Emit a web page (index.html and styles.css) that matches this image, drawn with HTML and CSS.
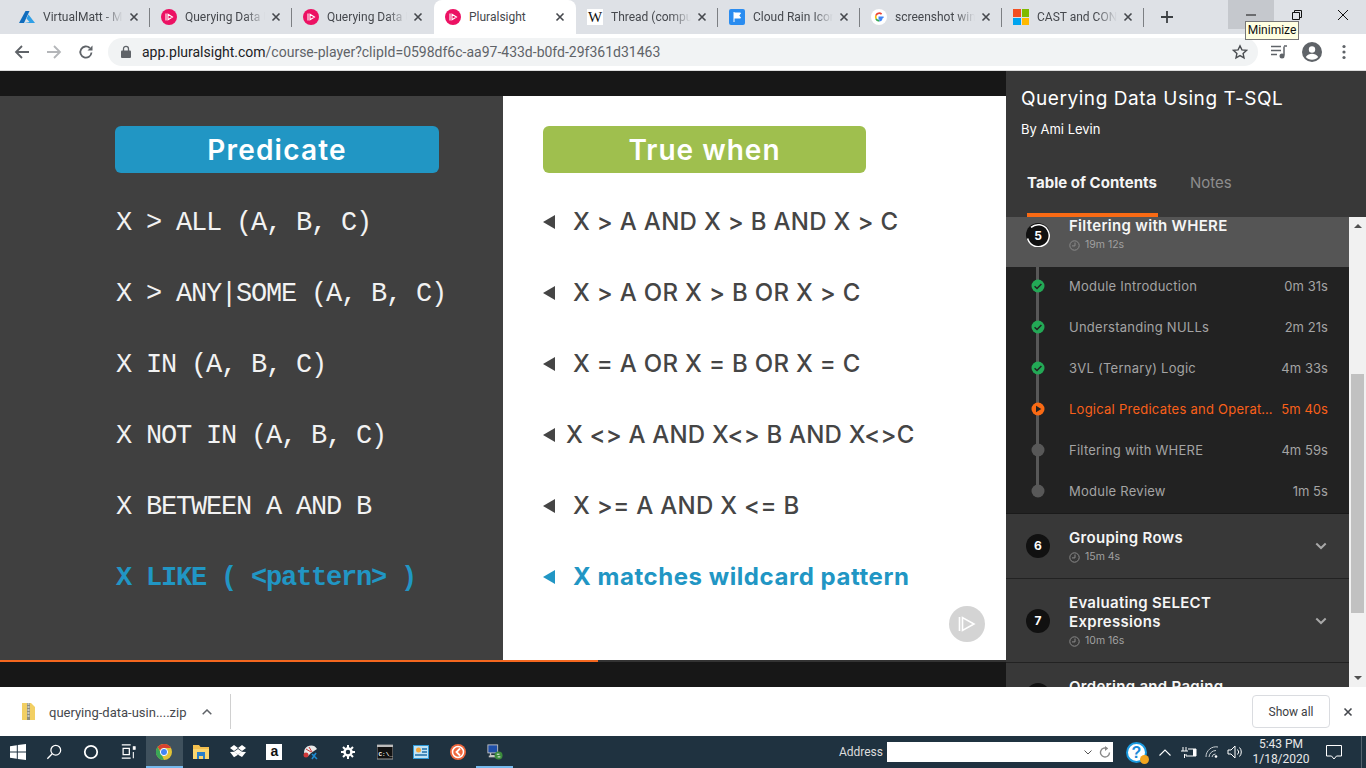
FILE: index.html
```html
<!DOCTYPE html>
<html lang="en">
<head>
<meta charset="utf-8">
<title>Pluralsight</title>
<link rel="stylesheet" href="styles.css">
</head>
<body>
<svg class="defs" width="0" height="0" aria-hidden="true">
  <symbol id="ps" viewBox="0 0 16 16">
    <circle cx="8" cy="8" r="8" fill="#ec1163"/>
    <path d="M5 4.500v7M7 5.200v5.600l4.500-2.800z" fill="none" stroke="#fff" stroke-width="1.100"/>
  </symbol>
  <symbol id="x" viewBox="0 0 10 10">
    <path d="M1.500 1.500l7 7M8.500 1.500l-7 7" stroke="#45484d" stroke-width="1.600" fill="none"/>
  </symbol>
  <symbol id="check" viewBox="0 0 14 14">
    <circle cx="7" cy="7" r="6.500" fill="#23a956"/>
    <path d="M3.600 7.200l2.400 2.300 4.400-4.600" fill="none" stroke="#222" stroke-width="1.500"/>
  </symbol>
  <symbol id="clock" viewBox="0 0 11 11">
    <circle cx="5.500" cy="5.500" r="4.700" fill="none" stroke="#8b8b8b" stroke-width="1"/>
    <path d="M6 2.500v3.400H3" fill="none" stroke="#8b8b8b" stroke-width="1"/>
  </symbol>
  <symbol id="chev" viewBox="0 0 12 8">
    <path d="M1.300 1.500L6 6l4.700-4.500" fill="none" stroke="#a8a8a8" stroke-width="2"/>
  </symbol>
</svg>

<header class="tabstrip">
  <div class="tab sep">
    <svg class="favicon" viewBox="0 0 16 16"><path d="M6.500 2h4L5 14H0z" fill="#0f6cbd"/><path d="M9.500 5.500L16 14H5.500l5-1-3-3.500z" fill="#2f9fe6"/></svg>
    <span class="tab-title">VirtualMatt - Microsoft</span>
    <svg class="tab-x"><use href="#x"/></svg>
  </div>
  <div class="tab sep">
    <svg class="favicon"><use href="#ps"/></svg>
    <span class="tab-title">Querying Data Using</span>
    <svg class="tab-x"><use href="#x"/></svg>
  </div>
  <div class="tab">
    <svg class="favicon"><use href="#ps"/></svg>
    <span class="tab-title">Querying Data Using</span>
    <svg class="tab-x"><use href="#x"/></svg>
  </div>
  <div class="tab tab-active">
    <svg class="favicon"><use href="#ps"/></svg>
    <span class="tab-title">Pluralsight</span>
    <svg class="tab-x"><use href="#x"/></svg>
  </div>
  <div class="tab sep">
    <span class="favicon wiki">W</span>
    <span class="tab-title">Thread (computing)</span>
    <svg class="tab-x"><use href="#x"/></svg>
  </div>
  <div class="tab sep">
    <svg class="favicon" viewBox="0 0 16 16"><rect width="16" height="16" rx="2" fill="#2a8cf0"/><path d="M5 3v10M5 4h6.500l-1.500 2.500 1.500 2.500H5" fill="#fff" stroke="#fff"/></svg>
    <span class="tab-title">Cloud Rain Icon</span>
    <svg class="tab-x"><use href="#x"/></svg>
  </div>
  <div class="tab sep">
    <svg class="favicon" viewBox="0 0 16 16"><circle cx="8" cy="8" r="8" fill="#fff"/><path d="M12.600 8.200H8.300v1.700h2.400c-.3 1.200-1.300 1.900-2.500 1.900" fill="none" stroke="#4285f4" stroke-width="1.600"/><path d="M8.200 11.800c-1.500 0-2.700-.9-3.200-2.200" fill="none" stroke="#34a853" stroke-width="1.700"/><path d="M5 9.600c-.4-1-.4-2.200 0-3.200" fill="none" stroke="#fbbc05" stroke-width="1.700"/><path d="M5 6.400c.5-1.300 1.700-2.200 3.200-2.200 1 0 1.700.3 2.400.9" fill="none" stroke="#ea4335" stroke-width="1.700"/></svg>
    <span class="tab-title">screenshot windows</span>
    <svg class="tab-x"><use href="#x"/></svg>
  </div>
  <div class="tab sep">
    <span class="favicon ms"><i class="ms-r"></i><i class="ms-g"></i><i class="ms-b"></i><i class="ms-y"></i></span>
    <span class="tab-title">CAST and CONVERT</span>
    <svg class="tab-x"><use href="#x"/></svg>
  </div>
  <svg class="newtab" viewBox="0 0 12 12"><path d="M6 0v12M0 6h12" stroke="#3c4043" stroke-width="1.800" fill="none"/></svg>
  <div class="winctl">
    <div class="wc wc-hover"><svg viewBox="0 0 10 10"><path d="M0 5h10" stroke="#111" fill="none"/></svg></div>
    <div class="wc"><svg viewBox="0 0 10 10"><path d="M.5 2.500h7v7h-7zM2.500 2.500V.5h7v7h-2" stroke="#111" fill="none"/></svg></div>
    <div class="wc"><svg viewBox="0 0 10 10"><path d="M0 0l10 10M10 0L0 10" stroke="#111" fill="none"/></svg></div>
  </div>
  <div class="tooltip">Minimize</div>
</header>

<nav class="toolbar">
  <svg class="tb-ico" viewBox="0 0 16 16"><path d="M15 8H2M8 2L2 8l6 6" fill="none" stroke="#5f6368" stroke-width="1.800"/></svg>
  <svg class="tb-ico" viewBox="0 0 16 16"><path d="M1 8h13M8 2l6 6-6 6" fill="none" stroke="#b4b6b9" stroke-width="1.800"/></svg>
  <svg class="tb-ico" viewBox="0 0 16 16"><path d="M13.500 8.500A5.600 5.600 0 1 1 11.800 4" fill="none" stroke="#5f6368" stroke-width="1.800"/><path d="M14.500 1.500v5h-5z" fill="#5f6368"/></svg>
  <div class="omnibox">
    <svg class="lock" viewBox="0 0 10 13"><path d="M2.500 6V3.800a2.500 2.500 0 0 1 5 0V6" fill="none" stroke="#5f6368" stroke-width="1.300"/><rect y="5.500" width="10" height="7.500" rx="1" fill="#5f6368"/></svg>
    <span class="url"><span class="url-host">app.pluralsight.com</span>/course-player?clipId=0598df6c-aa97-433d-b0fd-29f361d31463</span>
    <svg class="star" viewBox="0 0 16 16"><path d="M8 1.800l1.900 4.100 4.500.5-3.300 3 .9 4.400L8 11.600l-4 2.200.9-4.400-3.300-3 4.500-.5z" fill="none" stroke="#4a4d51" stroke-width="1.400"/></svg>
  </div>
  <svg class="tb-right media" viewBox="0 0 16 14"><path d="M0 1.500h10M0 5.500h10M0 9.500h6" stroke="#5f6368" stroke-width="1.500" fill="none"/><path d="M13 1.500v9" stroke="#5f6368" stroke-width="1.500"/><path d="M13 1h3" stroke="#5f6368" stroke-width="1.500"/><circle cx="11" cy="11" r="2.500" fill="#5f6368"/></svg>
  <svg class="tb-right avatar" viewBox="0 0 20 20"><circle cx="10" cy="10" r="10" fill="#5f6368"/><circle cx="10" cy="7.500" r="3.200" fill="#fff"/><path d="M3.800 15c1.500-2.500 3.800-3.200 6.200-3.200s4.700.7 6.200 3.200c-1.500 1.800-3.700 2.800-6.200 2.800S5.300 16.800 3.800 15z" fill="#fff"/></svg>
  <svg class="tb-right dots" viewBox="0 0 4 16"><circle cx="2" cy="2.500" r="1.600" fill="#5f6368"/><circle cx="2" cy="8" r="1.600" fill="#5f6368"/><circle cx="2" cy="13.500" r="1.600" fill="#5f6368"/></svg>
</nav>

<main class="player">
  <section class="video">
    <div class="video-top"></div>
    <div class="slide">
      <div class="slide-col slide-left">
        <div class="pill pill-blue">Predicate</div>
        <div class="code-row">X &gt; ALL (A, B, C)</div>
        <div class="code-row">X &gt; ANY|SOME (A, B, C)</div>
        <div class="code-row">X IN (A, B, C)</div>
        <div class="code-row">X NOT IN (A, B, C)</div>
        <div class="code-row">X BETWEEN A AND B</div>
        <div class="code-row code-hl">X LIKE ( &lt;pattern&gt; )</div>
      </div>
      <div class="slide-col slide-right">
        <div class="pill pill-green">True when</div>
        <div class="true-row"><i class="tri"></i>X &gt; A AND X &gt; B AND X &gt; C</div>
        <div class="true-row"><i class="tri"></i>X &gt; A OR X &gt; B OR X &gt; C</div>
        <div class="true-row"><i class="tri"></i>X = A OR X = B OR X = C</div>
        <div class="true-row tight"><i class="tri"></i>X &lt;&gt; A AND X&lt;&gt; B AND X&lt;&gt;C</div>
        <div class="true-row"><i class="tri"></i>X &gt;= A AND X &lt;= B</div>
        <div class="true-row true-hl"><i class="tri"></i>X matches wildcard pattern</div>
        <svg class="watermark" viewBox="0 0 36 36"><circle cx="18" cy="18" r="18" fill="#d4d4d4"/><path d="M10.500 11v14M13.500 11.500v13L25 18z" fill="none" stroke="#fff" stroke-width="1.600"/></svg>
      </div>
    </div>
    <div class="progress"><div class="progress-fill"></div></div>
  </section>

  <aside class="sidebar">
    <div class="course-head">
      <h1 class="course-title">Querying Data Using T-SQL</h1>
      <p class="course-author">By Ami Levin</p>
    </div>
    <div class="side-tabs">
      <span class="side-tab side-tab-on">Table of Contents</span>
      <span class="side-tab">Notes</span>
    </div>
    <div class="toc-wrap">
      <div class="toc">
        <div class="module module-open">
          <svg class="mod-ring" viewBox="0 0 24 24"><circle cx="12" cy="12" r="12" fill="#111"/><path d="M5 4.400A11 11 0 1 1 1.600 15.500" fill="none" stroke="#fff" stroke-width="1.500"/><text class="ring-num" x="12" y="16.500" text-anchor="middle">5</text></svg>
          <div class="mod-text">
            <div class="mod-title">Filtering with WHERE</div>
            <div class="mod-dur"><svg class="clock"><use href="#clock"/></svg>19m 12s</div>
          </div>
        </div>
        <ul class="lessons">
          <li class="lesson"><svg class="dot"><use href="#check"/></svg><span class="l-name">Module Introduction</span><span class="l-time">0m 31s</span></li>
          <li class="lesson"><svg class="dot"><use href="#check"/></svg><span class="l-name">Understanding NULLs</span><span class="l-time">2m 21s</span></li>
          <li class="lesson"><svg class="dot"><use href="#check"/></svg><span class="l-name">3VL (Ternary) Logic</span><span class="l-time">4m 33s</span></li>
          <li class="lesson lesson-on"><svg class="dot" viewBox="0 0 14 14"><circle cx="7" cy="7" r="6.500" fill="#f96a14"/><path d="M5 3.800v6.400L10.300 7z" fill="#222"/></svg><span class="l-name">Logical Predicates and Operators</span><span class="l-time">5m 40s</span></li>
          <li class="lesson"><svg class="dot" viewBox="0 0 14 14"><circle cx="7" cy="7" r="6.500" fill="#585858"/></svg><span class="l-name">Filtering with WHERE</span><span class="l-time">4m 59s</span></li>
          <li class="lesson"><svg class="dot" viewBox="0 0 14 14"><circle cx="7" cy="7" r="6.500" fill="#585858"/></svg><span class="l-name">Module Review</span><span class="l-time">1m 5s</span></li>
        </ul>
        <div class="module">
          <span class="mod-num">6</span>
          <div class="mod-text">
            <div class="mod-title">Grouping Rows</div>
            <div class="mod-dur"><svg class="clock"><use href="#clock"/></svg>15m 4s</div>
          </div>
          <svg class="chev"><use href="#chev"/></svg>
        </div>
        <div class="module">
          <span class="mod-num">7</span>
          <div class="mod-text">
            <div class="mod-title">Evaluating SELECT<br>Expressions</div>
            <div class="mod-dur"><svg class="clock"><use href="#clock"/></svg>10m 16s</div>
          </div>
          <svg class="chev"><use href="#chev"/></svg>
        </div>
        <div class="module">
          <span class="mod-num">8</span>
          <div class="mod-text">
            <div class="mod-title">Ordering and Paging</div>
            <div class="mod-dur"><svg class="clock"><use href="#clock"/></svg>12m 8s</div>
          </div>
          <svg class="chev"><use href="#chev"/></svg>
        </div>
      </div>
      <div class="scrollbar">
        <i class="sb-up"></i>
        <div class="sb-track"><div class="sb-thumb"></div></div>
        <i class="sb-down"></i>
      </div>
    </div>
  </aside>
</main>

<footer class="downloads">
  <div class="dl-item">
    <svg class="zip" viewBox="0 0 13 17"><path d="M0 0h9l4 4v13H0z" fill="#f2cf63"/><path d="M5 0h3v17H5z" fill="#8d8d7c"/><path d="M5.500 1h2M5.500 4h2M5.500 7h2M5.500 10h2M5.500 13h2" stroke="#fff"/></svg>
    <span class="dl-name">querying-data-usin....zip</span>
    <svg class="dl-caret" viewBox="0 0 10 6"><path d="M.7 5.300L5 1l4.300 4.300" fill="none" stroke="#5f6368" stroke-width="1.500"/></svg>
  </div>
  <button class="showall">Show all</button>
  <svg class="dl-close"><use href="#x"/></svg>
</footer>

<div class="taskbar">
  <svg class="tk-start" viewBox="0 0 16 16"><path d="M0 2.200L6.800 1.200V7.500H0zM7.800 1L16 0v7.500H7.800zM0 8.500h6.800v6.300L0 13.800zM7.800 8.500H16V16l-8.200-1.100z" fill="#fff"/></svg>
  <div class="tk-btn"><svg viewBox="0 0 18 18"><circle cx="11" cy="7" r="5.500" fill="none" stroke="#fff" stroke-width="1.400"/><path d="M7 11l-5.500 5.500" stroke="#fff" stroke-width="1.500"/></svg></div>
  <div class="tk-btn"><svg viewBox="0 0 18 18"><circle cx="9" cy="9" r="7" fill="none" stroke="#fff" stroke-width="2"/></svg></div>
  <div class="tk-btn"><svg viewBox="0 0 18 18"><path d="M2 1h10M2 16h10M3.500 5h7v7h-7z" fill="none" stroke="#fff" stroke-width="1.400"/><path d="M15 3h2v3h-2zM15 9v7" stroke="#fff" stroke-width="1.200" fill="#fff"/></svg></div>
  <div class="tk-btn tk-active"><svg viewBox="0 0 16 16"><circle cx="8" cy="8" r="8" fill="#e2c336"/><path d="M8 0a8 8 0 0 1 7 4H8a4 4 0 0 0-3.800 2.800L1.700 3A8 8 0 0 1 8 0z" fill="#d8412f"/><path d="M1.700 3L5 9.500 8 16A8 8 0 0 1 1.700 3z" fill="#3aa757"/><circle cx="8" cy="8" r="3.600" fill="#4285f4" stroke="#fff" stroke-width="1"/></svg></div>
  <div class="tk-btn"><svg viewBox="0 0 16 16"><path d="M0 1h6l1.500 2H16v12H0z" fill="#f4c04e"/><path d="M0 5h16v10H0z" fill="#fbd66f"/><path d="M4 8h8v7H10v-3H6v3H4z" fill="#2a7fc9"/></svg></div>
  <div class="tk-btn"><svg viewBox="0 0 16 16"><path d="M4 1L8 4 4 7 0 4zM12 1l4 3-4 3-4-3zM4 7.800l4-2.800 4 2.800-4 2.800zM0 8l4-.3 4 3-4 2.500zM12 7.700L16 8l-4 5-4-2.200z" fill="#fff"/></svg></div>
  <div class="tk-btn"><span class="amazon">a</span></div>
  <div class="tk-btn"><svg viewBox="0 0 16 16"><path d="M1 8a7 7 0 0 1 13-3L8 9l-3 3H2z" fill="#e8e8e8"/><path d="M3 5l5 3M6 3l3 5" stroke="#d03838"/><circle cx="3" cy="11" r="2.500" fill="#d03838"/><path d="M9 10l5 5M13 9l-4 6" stroke="#1f8ad0" stroke-width="1.600"/></svg></div>
  <div class="tk-btn"><svg viewBox="0 0 16 16"><circle cx="8" cy="8" r="3.500" fill="none" stroke="#fff" stroke-width="2.500"/><path d="M8 1v3M8 12v3M1 8h3M12 8h3M3 3l2 2M11 11l2 2M13 3l-2 2M5 11l-2 2" stroke="#fff" stroke-width="2"/></svg></div>
  <div class="tk-btn"><svg viewBox="0 0 16 14"><rect width="16" height="14" fill="#111" stroke="#999"/><rect width="16" height="2" fill="#bbb"/><text class="cmd-txt" x="1.500" y="10.500">C:\_</text></svg></div>
  <div class="tk-btn"><svg viewBox="0 0 16 14"><rect width="16" height="14" fill="#2d9ad8"/><rect x="1" y="1" width="14" height="12" fill="#bfe3f6"/><circle cx="5.500" cy="5" r="2.500" fill="#f2a63c"/><path d="M9 4h5M9 7h5M2 10h12" stroke="#1f6fa8" stroke-width="1.300"/></svg></div>
  <div class="tk-btn"><svg viewBox="0 0 16 16"><circle cx="8" cy="8" r="8" fill="#f0673c"/><circle cx="8" cy="8" r="5.500" fill="none" stroke="#fff" stroke-width="1.500"/><path d="M10 4.500L6.500 8l3.500 3.500" fill="none" stroke="#fff" stroke-width="1.800"/></svg></div>
  <div class="tk-btn tk-running"><svg viewBox="0 0 18 18"><rect x="1" y="1" width="11" height="9" fill="#1f4fa8" stroke="#c4c4c4"/><path d="M4 10v3h6" stroke="#c4c4c4" stroke-width="1.500" fill="none"/><rect x="2" y="13" width="9" height="2" fill="#c4c4c4"/><circle cx="13" cy="13" r="4.500" fill="#3c8c3c"/><path d="M11 11.500h3M12 14.500h3" stroke="#fff"/></svg></div>
  <div class="tk-tray">
    <span class="addr-label">Address</span>
    <div class="addr-box">
      <svg class="addr-chev" viewBox="0 0 8 5"><path d="M.5.500L4 4 7.500.5" fill="none" stroke="#555"/></svg>
      <svg class="addr-go" viewBox="0 0 12 12"><path d="M10.500 6.500a4.500 4.500 0 1 1-2-3.800" fill="none" stroke="#888" stroke-width="1.400"/><path d="M6 0v5l3-2.500z" fill="#888"/></svg>
    </div>
    <div class="help"><span class="help-q">?</span><i class="help-badge"></i></div>
    <svg class="tray-ico tray-up" viewBox="0 0 12 7"><path d="M.5 6.500L6 1l5.500 5.500" fill="none" stroke="#fff" stroke-width="1.100"/></svg>
    <svg class="tray-ico tray-batt" viewBox="0 0 16 12"><path d="M2 1v4M5 1v4M0 5h7M3.500 8v4" stroke="#fff" fill="none"/><path d="M7 3h8v7H5V8" fill="none" stroke="#fff"/><path d="M12 3h3v7h-3z" fill="#fff"/></svg>
    <svg class="tray-ico tray-wifi" viewBox="0 0 14 12"><path d="M1 11A10 10 0 0 1 13 1M4 11a7 7 0 0 1 7-6.500M7 11a3.500 3.500 0 0 1 3.500-3" fill="none" stroke="#c9cfd3"/><circle cx="11" cy="10.500" r="1.300" fill="#fff"/></svg>
    <svg class="tray-ico tray-vol" viewBox="0 0 16 14"><path d="M1 5h3l4-4v12L4 9H1z" fill="none" stroke="#fff"/><path d="M10.500 4.500a3.500 3.500 0 0 1 0 5M12.500 2.500a6.500 6.500 0 0 1 0 9" fill="none" stroke="#fff"/></svg>
    <div class="clock-text"><span>5:43 PM</span><span>1/18/2020</span></div>
    <svg class="tray-note" viewBox="0 0 16 15"><path d="M.5.5h15v10.500h-5l-2.500 3-2.500-3h-5z" fill="none" stroke="#fff"/></svg>
    <i class="show-desk"></i>
  </div>
</div>
</body>
</html>
```

FILE: styles.css
```css
* { box-sizing: border-box; }
html, body { margin: 0; padding: 0; }
body {
  width: 1366px;
  height: 768px;
  overflow: hidden;
  display: flex;
  flex-direction: column;
  font-family: "Open Sans", "Noto Sans", sans-serif;
  background: #171717;
}
.defs { position: absolute; }

/* Tab strip */
.tabstrip {
  position: relative;
  flex: none;
  height: 34px;
  background: #dee1e6;
  display: flex;
  align-items: stretch;
  padding-left: 8px;
}
.tab {
  width: 142px;
  display: flex;
  align-items: center;
  padding: 0 8px 0 11px;
  position: relative;
  color: #45484d;
}
.tab.sep::after {
  content: "";
  position: absolute;
  right: 0;
  top: 8px;
  bottom: 7px;
  width: 1px;
  background: #7c7f83;
}
.tab-active {
  background: #fff;
  border-radius: 8px 8px 0 0;
}
.favicon {
  flex: none;
  width: 16px;
  height: 16px;
  margin-right: 8px;
}
.wiki {
  background: #fff;
  color: #111;
  font: 400 15px/16px "Liberation Serif", serif;
  text-align: center;
}
.ms {
  display: grid;
  grid-template-columns: 7.500px 7.500px;
  grid-template-rows: 7.500px 7.500px;
  gap: 1px;
}
.ms-r { background: #f25022; }
.ms-g { background: #7fba00; }
.ms-b { background: #00a4ef; }
.ms-y { background: #ffb900; }
.tab-title {
  flex: 1;
  min-width: 0;
  white-space: nowrap;
  overflow: hidden;
  font: 12px/16px Roboto, sans-serif;
  -webkit-mask-image: linear-gradient(90deg, #000 75%, transparent 100%);
  mask-image: linear-gradient(90deg, #000 75%, transparent 100%);
}
.tab-active .tab-title { -webkit-mask-image: none; mask-image: none; }
.tab-x { flex: none; width: 10px; height: 10px; margin: 0 3px 0 6px; }
.newtab { width: 12px; height: 12px; align-self: center; margin-left: 17px; }
.winctl { margin-left: auto; display: flex; align-self: flex-start; }
.wc { width: 46px; height: 29px; display: flex; align-items: center; justify-content: center; }
.wc svg { width: 10px; height: 10px; }
.wc-hover { background: #c5c8cd; }
.tooltip {
  position: absolute;
  left: 1245px;
  top: 21px;
  width: 54px;
  height: 19px;
  border: 1px solid #767676;
  background: #ffffe1;
  color: #111;
  font: 12px/17px Roboto, sans-serif;
  text-align: center;
  z-index: 5;
}

/* Toolbar */
.toolbar {
  flex: none;
  height: 37px;
  background: #fff;
  display: flex;
  align-items: center;
  padding: 0 0 1px 14px;
  border-bottom: 1px solid #dcdcdc;
}
.tb-ico { width: 16px; height: 16px; margin-right: 16px; }
.omnibox {
  width: 1150px;
  height: 28px;
  margin-left: -2px;
  border-radius: 14px;
  background: #f1f3f4;
  display: flex;
  align-items: center;
  padding: 0 10px 0 13px;
}
.lock { width: 10px; height: 13px; margin-right: 11px; }
.url { flex: 1; font: 14px/18px Roboto, sans-serif; color: #5f6368; white-space: nowrap; }
.url-host { color: #202124; }
.star { width: 16px; height: 16px; }
.tb-right { flex: none; }
.media { width: 16px; height: 14px; margin-left: 13px; }
.avatar { width: 20px; height: 20px; margin-left: 15px; }
.dots { width: 4px; height: 16px; margin-left: 20px; }

/* Player */
.player { flex: none; height: 616px; display: flex; }
.video { width: 1006px; background: #171717; display: flex; flex-direction: column; }
.video-top { height: 25px; flex: none; }
.slide { height: 564px; flex: none; display: flex; }
.slide-col { width: 503px; padding-top: 30px; }
.slide-left { background: #404040; padding-left: 115px; }
.slide-right { background: #fff; padding-left: 40px; position: relative; }
.pill {
  width: 324px;
  height: 47px;
  border-radius: 6px;
  margin-bottom: 13px;
  padding-top: 1px;
  color: #fff;
  font: 600 28px/47px Inter, sans-serif;
  letter-spacing: 1.200px;
  text-align: center;
}
.pill-blue { background: #2196c4; }
.pill-green { background: #9fbf4e; width: 323px; letter-spacing: 1px; }
.code-row {
  height: 71px;
  display: flex;
  align-items: center;
  white-space: pre;
  padding: 4px 0 0 1px;
  color: #f2f2f2;
  font: 27px/67px "Liberation Mono", monospace;
  letter-spacing: -1.200px;
}
.code-hl { color: #2196c4; font-weight: 700; }
.true-row {
  height: 71px;
  display: flex;
  align-items: center;
  white-space: pre;
  color: #454545;
  font: 500 24px/71px Inter, sans-serif;
  letter-spacing: .3px;
}
.tri {
  width: 0;
  height: 0;
  margin-right: 18px;
  border-style: solid;
  border-width: 7px 12px 7px 0;
  border-color: transparent #454545 transparent transparent;
}
.true-row.tight { letter-spacing: .18px; }
.true-row.tight .tri { margin-right: 11px; }
.true-hl { color: #2196c4; font-weight: 700; letter-spacing: .55px; }
.true-hl .tri { border-right-color: #2196c4; }
.watermark { position: absolute; left: 446px; top: 510px; width: 36px; height: 36px; }
.progress { height: 2px; flex: none; background: #333; }
.progress-fill { width: 598px; height: 2px; background: #f4671f; }

/* Sidebar */
.sidebar { width: 360px; background: #383838; display: flex; flex-direction: column; color: #fff; font-family: Inter, sans-serif; }
.course-head { height: 96px; padding: 15px 0 0 15px; flex: none; }
.course-title { margin: 0; font-size: 19px; font-weight: 400; line-height: 25px; letter-spacing: .55px; }
.course-author { margin: 9px 0 0; font-size: 13px; line-height: 18px; }
.side-tabs { height: 50px; flex: none; display: flex; padding-left: 21px; gap: 32px; }
.side-tab { font-size: 15px; line-height: 32px; color: #8d8d8d; height: 50px; position: relative; }
.side-tab-on { color: #f5f5f5; font-weight: 700; border-bottom: 4px solid #f96a14; width: 131px; white-space: nowrap; letter-spacing: .03px; }
.toc-wrap { flex: 1; min-height: 0; display: flex; }
.toc { width: 343px; overflow: hidden; background: #383838; }
.module {
  display: flex;
  align-items: center;
  padding: 14px 21px 14px 20px;
  border-bottom: 1px solid #222;
}
.module-open { background: #555; height: 50px; border: 0; align-items: flex-start; padding-top: 0; padding-bottom: 0; }
.mod-ring { width: 24px; height: 24px; flex: none; margin-top: 6px; }
.ring-num { fill: #fff; font: 700 12px Inter, sans-serif; }
.mod-num {
  flex: none;
  width: 24px;
  height: 24px;
  border-radius: 50%;
  background: #111;
  color: #fff;
  font: 700 12px/24px Inter, sans-serif;
  text-align: center;
}
.mod-text { flex: 1; margin-left: 19px; }
.mod-title { font-size: 15px; font-weight: 600; line-height: 19px; letter-spacing: .3px; color: #f5f5f5; }
.module-open .mod-title { margin-top: -1px; }
.mod-dur { display: flex; align-items: center; font-size: 10.500px; line-height: 14px; color: #a0a0a0; margin-top: 3px; }
.clock { width: 11px; height: 11px; margin-right: 5px; }
.chev { width: 12px; height: 8px; flex: none; margin-right: 1px; }
.lessons {
  list-style: none;
  margin: 0;
  padding: 0;
  background: #222;
  border-bottom: 1px solid #1a1a1a;
  position: relative;
}
.lessons::before {
  content: "";
  position: absolute;
  left: 29.500px;
  top: 0;
  bottom: 22px;
  width: 3px;
  background: #585858;
}
.lesson {
  position: relative;
  height: 41px;
  display: flex;
  align-items: center;
  padding: 0 21px 3px 25px;
  font-size: 13px;
  color: #a4a4a4;
}
.dot { width: 14px; height: 14px; flex: none; margin-right: 24px; }
.l-name { flex: 1; min-width: 0; white-space: nowrap; overflow: hidden; text-overflow: ellipsis; margin-right: 6px; letter-spacing: .25px; }
.l-time { flex: none; letter-spacing: .05px; }
.lesson-on { color: #f9601a; }
.scrollbar { width: 17px; background: #f1f1f1; display: flex; flex-direction: column; align-items: center; }
.sb-up, .sb-down { flex: none; width: 0; height: 0; border-style: solid; }
.sb-up { margin: 7px 0 5px; border-width: 0 4px 4px; border-color: transparent transparent #505050; }
.sb-down { margin: 5px 0 7px; border-width: 4px 4px 0; border-color: #505050 transparent transparent; }
.sb-track { flex: 1; width: 100%; padding: 141px 2px 58px; }
.sb-thumb { height: 100%; background: #c1c1c1; }

/* Download bar */
.downloads {
  flex: none;
  height: 49px;
  background: #fff;
  display: flex;
  align-items: center;
  padding-left: 22px;
}
.dl-item {
  width: 209px;
  height: 35px;
  display: flex;
  align-items: center;
  border-right: 1px solid #d0d0d0;
}
.zip { width: 13px; height: 17px; margin: 0 14px 0 0; }
.dl-name { font: 13px/18px Roboto, sans-serif; color: #45484d; white-space: nowrap; padding-top: 2px; }
.dl-caret { width: 10px; height: 6px; margin-left: 15px; }
.showall {
  margin-left: auto;
  width: 78px;
  height: 33px;
  border: 1px solid #dadce0;
  border-radius: 4px;
  background: #fff;
  color: #3c4043;
  font: 12px Roboto, sans-serif;
}
.dl-close { width: 10px; height: 10px; margin: 0 13px 0 13px; }

/* Taskbar */
.taskbar {
  flex: none;
  height: 32px;
  background: #1f3240;
  display: flex;
  align-items: stretch;
}
.tk-start { width: 16px; height: 16px; align-self: center; margin: 0 10px 0 10px; }
.tk-btn {
  width: 36.700px;
  flex: none;
  display: flex;
  align-items: center;
  justify-content: center;
  border-bottom: 2px solid transparent;
  border-top: 2px solid transparent;
}
.tk-btn svg { width: 16px; height: 16px; }
.tk-active { background: #3f515d; border-bottom-color: #76b9ed; }
.tk-running { border-bottom-color: #76b9ed; }
.amazon {
  width: 16px;
  height: 16px;
  background: #fff;
  color: #111;
  font: 700 14px/14px "Liberation Sans", sans-serif;
  text-align: center;
}
.cmd-txt { fill: #fff; font: 700 6px "Liberation Mono", monospace; }
.tk-tray { margin-left: auto; display: flex; align-items: center; color: #fff; position: relative; }
.addr-label { font: 12px/16px Roboto, sans-serif; color: #ddd; margin-right: 4px; }
.addr-box {
  width: 226px;
  height: 20px;
  background: #fff;
  display: flex;
  align-items: center;
  justify-content: flex-end;
  margin-right: 13px;
}
.addr-chev { width: 8px; height: 5px; margin-right: 7px; }
.addr-go { width: 12px; height: 12px; margin: 0 2px 0 0; }
.help {
  width: 21px;
  height: 21px;
  border-radius: 50%;
  background: #fff;
  border: 2px solid #1a9ae0;
  position: relative;
  text-align: center;
  margin-right: 12px;
}
.help-q { font: 700 16px/17px "Liberation Sans", sans-serif; color: #1a8ad8; display: block; }
.help-badge { position: absolute; right: -4px; bottom: -3px; width: 9px; height: 9px; border-radius: 50%; background: #f2a51e; }
.tray-ico { flex: none; }
.tray-up { width: 12px; height: 7px; margin-right: 10px; }
.tray-batt { width: 16px; height: 12px; margin-right: 8px; }
.tray-wifi { width: 14px; height: 12px; margin-right: 8px; }
.tray-vol { width: 16px; height: 14px; margin-right: 6px; }
.clock-text { width: 64px; display: flex; flex-direction: column; align-items: center; font: 12px/15px Roboto, sans-serif; color: #e8e8e8; margin-right: 13px; }
.tray-note { width: 16px; height: 15px; margin-right: 19px; }
.show-desk { width: 1px; height: 32px; background: #55636e; margin-right: 4px; }
```
